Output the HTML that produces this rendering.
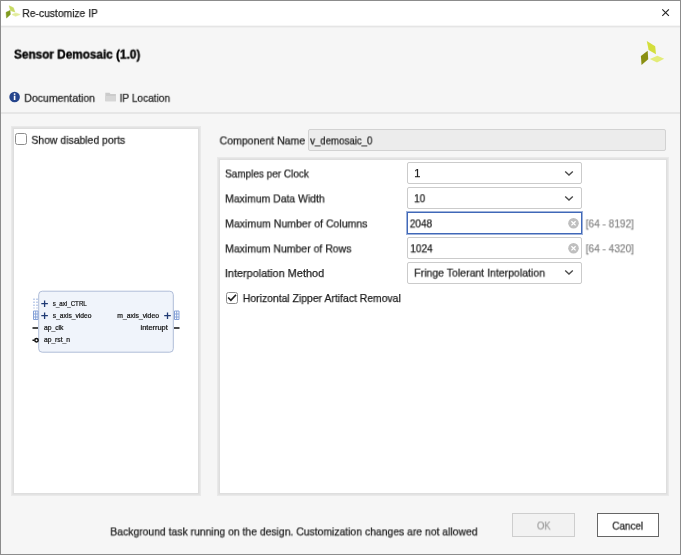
<!DOCTYPE html>
<html><head><meta charset="utf-8"><title>Re-customize IP</title>
<style>
*{box-sizing:border-box;margin:0;padding:0}
html,body{width:681px;height:555px;overflow:hidden;background:#f6f6f6}
body{font-family:"Liberation Sans",sans-serif;font-size:11px;color:#222;position:relative}
.abs{position:absolute}
.t{-webkit-text-stroke:0.25px currentColor;position:absolute;white-space:nowrap;line-height:16px;height:16px;will-change:transform;transform-origin:0 0}
#win{position:absolute;left:0;top:0;width:681px;height:555px;border:1px solid #8c8c8c}
#titlebar{position:absolute;left:1px;top:1px;width:679px;height:24px;background:#fff}
.hr{position:absolute;left:1px;width:679px;height:2px;background:#e6e6e6}
.panel{position:absolute;background:#fff;box-shadow:inset 0 0 0 1px #e9e9e9,inset 0 0 0 2px #e3e3e3,inset 0 0 0 3px #dedede}
.combo{position:absolute;left:407px;width:175px;height:22px;background:#fff;border:1px solid #cbcbcb;border-radius:2px}
.cb{position:absolute;width:12px;height:12px;border:1px solid #8e8e8e;border-radius:2.5px;background:#fff}
.btn{position:absolute;width:62px;height:24px;background:#fff;border:1px solid #666}
</style></head><body>
<div id="win"></div>
<div id="titlebar"></div>
<svg class="abs" style="left:4px;top:4px" width="18" height="16" viewBox="4 4 18 16">
<polygon points="9.200,5.800 13.400,7.800 14.800,12 10.500,10.500" fill="#c6da62" stroke="#c6da62" stroke-width="0.600" stroke-linejoin="round"/>
<polygon points="6.100,12.300 10,10.500 10.400,14.500 6.500,18" fill="#7f9a1e" stroke="#7f9a1e" stroke-width="0.500" stroke-linejoin="round"/>
<polygon points="12,14.500 15.800,12.900 20.200,14.500 15.600,16.300" fill="#e2ec9c" stroke="#e2ec9c" stroke-width="0.600" stroke-linejoin="round"/>
</svg>
<svg class="abs" style="left:661px;top:8px" width="10" height="10" viewBox="0 0 10 10"><path d="M1.300 1.300L7.900 7.900M7.900 1.300L1.300 7.900" stroke="#222" stroke-width="1.100" fill="none"/></svg>
<div class="hr" style="top:25px;height:1px;background:#f6f6f6"></div><div class="hr" style="top:26px;height:1px;background:#e5e5e5"></div><div class="hr" style="top:27px;height:1px;background:#efefef"></div>

<svg class="abs" style="left:638px;top:39px" width="28" height="28" viewBox="638 39 28 28">
<polygon points="646.800,41 655.200,46.300 656,54.200 648.600,50" fill="#d3de3c"/>
<polygon points="640.900,56 647.700,50.700 648.200,59.200 641.500,65" fill="#8a8f12"/>
<polygon points="649.800,58.900 657.400,55.700 664.200,58.800 657,62.600" fill="#e3ec78"/>
</svg>

<svg class="abs" style="left:8px;top:90px" width="14" height="14" viewBox="8 90 14 14">
<circle cx="14.600" cy="97" r="5.300" fill="#25448c"/>
<circle cx="14.600" cy="94.100" r="0.950" fill="#fff"/>
<rect x="13.800" y="95.700" width="1.600" height="4.300" fill="#fff"/>
</svg>
<svg class="abs" style="left:104px;top:91px" width="14" height="12" viewBox="104 91 14 12">
<path d="M105.300 92.700h4.200l1 1.300h5.400v7.200h-10.600z" fill="#cbcbcb"/>
<path d="M105.300 96h10.600v5.200h-10.600z" fill="#d6d6d6"/>
</svg>
<div class="hr" style="top:112px"></div>

<div class="panel" style="left:11px;top:126px;width:190px;height:370px"></div>
<div class="cb" style="left:15px;top:133px"></div>

<!-- block diagram -->
<svg class="abs" style="left:28px;top:286px;will-change:transform" width="156" height="72" viewBox="28 286 156 72" font-family="Liberation Sans, sans-serif">
<rect x="38.700" y="291.200" width="134.600" height="61" rx="3.500" fill="#f0f4fb" stroke="#b0bdd8"/>
<g stroke="#1f3a74" stroke-width="1.300"><path d="M41.300 303.700h6.600M44.600 300.400v6.600"/><path d="M41.300 315.700h6.600M44.600 312.400v6.600"/><path d="M164.200 315.700h6.600M167.500 312.400v6.600"/></g>
<g stroke="#86a2d8" stroke-width="1" fill="none"><path d="M34 298.500v10M37 298.500v10" stroke-dasharray="1.500 1.500"/><path d="M33.500 311h4.500v8.500h-4.500zM33.500 314h4.500M33.500 317h4.500M35.700 311v8.500"/><path d="M174.500 311h4.500v8.500h-4.500zM174.500 314h4.500M174.500 317h4.500M176.700 311v8.500"/></g>
<g stroke="#111" stroke-width="1.500"><path d="M32.500 328h5.500M174 328h5.500M32.500 340.200h2"/></g>
<circle cx="36.500" cy="340.200" r="1.700" fill="#fff" stroke="#111" stroke-width="1.500"/>
<g font-size="6.400" fill="#111" stroke="#111" stroke-width="0.200">
<text x="52.800" y="305.500" textLength="34" lengthAdjust="spacingAndGlyphs">s_axi_CTRL</text>
<text x="52.800" y="317.500" textLength="38.700" lengthAdjust="spacingAndGlyphs">s_axis_video</text>
<text x="43.900" y="329.700" textLength="19.600" lengthAdjust="spacingAndGlyphs">ap_clk</text>
<text x="43.900" y="342.100" textLength="26.200" lengthAdjust="spacingAndGlyphs">ap_rst_n</text>
<text x="117.300" y="317.500" textLength="41.700" lengthAdjust="spacingAndGlyphs">m_axis_video</text>
<text x="140.600" y="329.700" textLength="27.200" lengthAdjust="spacingAndGlyphs">interrupt</text>
</g>
</svg>

<div class="abs" style="left:308px;top:129px;width:358px;height:22px;background:#ececec;border:1px solid #d2d2d2;border-radius:2px"></div>

<div class="panel" style="left:217px;top:157px;width:452px;height:339px"></div>

<div class="combo" style="top:162px"></div>
<div class="combo" style="top:187px"></div>
<div class="combo" style="top:212px;border:1px solid #4068b8;border-radius:0;box-shadow:0 0 0 1px rgba(64,104,184,0.5)"></div>
<div class="combo" style="top:237px"></div>
<div class="combo" style="top:262px"></div>

<svg class="abs" style="left:563px;top:169px" width="12" height="8" viewBox="0 0 12 8"><path d="M2.200 2.400L6 6L9.800 2.400" stroke="#4d4d4d" stroke-width="1.400" fill="none"/></svg>
<svg class="abs" style="left:563px;top:194px" width="12" height="8" viewBox="0 0 12 8"><path d="M2.200 2.400L6 6L9.800 2.400" stroke="#4d4d4d" stroke-width="1.400" fill="none"/></svg>
<svg class="abs" style="left:563px;top:268px" width="12" height="8" viewBox="0 0 12 8"><path d="M2.200 2.400L6 6L9.800 2.400" stroke="#4d4d4d" stroke-width="1.400" fill="none"/></svg>

<svg class="abs" style="left:567px;top:217px" width="13" height="13" viewBox="0 0 13 13"><circle cx="6.500" cy="6.300" r="5.300" fill="#bfbfbf"/><path d="M4.400 4.200L8.600 8.400M8.600 4.200L4.400 8.400" stroke="#fff" stroke-width="1.300"/></svg>
<svg class="abs" style="left:567px;top:242px" width="13" height="13" viewBox="0 0 13 13"><circle cx="6.500" cy="6.300" r="5.300" fill="#bfbfbf"/><path d="M4.400 4.200L8.600 8.400M8.600 4.200L4.400 8.400" stroke="#fff" stroke-width="1.300"/></svg>

<div class="cb" style="left:226px;top:292px"></div>
<svg class="abs" style="left:226px;top:292px" width="12" height="12" viewBox="0 0 12 12"><path d="M2.100 5.500L4.900 8.300L10 2.700" stroke="#222" stroke-width="1.700" fill="none"/></svg>

<div class="btn" style="left:512px;top:513px;width:63px;border-color:#cecece;background:#f2f2f2"></div>
<div class="btn" style="left:597px;top:513px"></div>
<div class="t" style="left:22px;top:5px;font-size:11px;transform:translate(0.30px,0.00px) scaleX(0.9375);color:#1f1f1f">Re-customize IP</div>
<div class="t" style="left:14px;top:46px;font-size:12px;font-weight:bold;-webkit-text-stroke:0.35px currentColor;transform:translate(0.00px,0.60px) scaleX(0.9809);color:#000">Sensor Demosaic (1.0)</div>
<div class="t" style="left:24px;top:89px;font-size:11px;transform:translate(0.30px,0.80px) scaleX(0.9564);color:#1c1c1c">Documentation</div>
<div class="t" style="left:119px;top:89px;font-size:11px;transform:translate(0.60px,0.80px) scaleX(0.9202);color:#1c1c1c">IP Location</div>
<div class="t" style="left:31px;top:131px;font-size:11px;transform:translate(0.40px,0.80px) scaleX(0.9472);color:#1c1c1c">Show disabled ports</div>
<div class="t" style="left:219px;top:132px;font-size:11px;transform:translate(0.60px,0.40px) scaleX(0.9585);color:#1c1c1c">Component Name</div>
<div class="t" style="left:310px;top:132px;font-size:11px;transform:translate(0.10px,0.40px) scaleX(0.8786);color:#1c1c1c">v_demosaic_0</div>
<div class="t" style="left:225px;top:165px;font-size:11px;transform:translate(0.10px,0.50px) scaleX(0.9072);color:#1c1c1c">Samples per Clock</div>
<div class="t" style="left:225px;top:190px;font-size:11px;transform:translate(0.10px,0.40px) scaleX(0.9473);color:#1c1c1c">Maximum Data Width</div>
<div class="t" style="left:225px;top:215px;font-size:11px;transform:translate(0.10px,0.40px) scaleX(0.9584);color:#1c1c1c">Maximum Number of Columns</div>
<div class="t" style="left:225px;top:240px;font-size:11px;transform:translate(0.10px,0.40px) scaleX(0.9520);color:#1c1c1c">Maximum Number of Rows</div>
<div class="t" style="left:224px;top:265px;font-size:11px;transform:translate(0.80px,0.00px) scaleX(0.9899);color:#1c1c1c">Interpolation Method</div>
<div class="t" style="left:242px;top:290px;font-size:11px;transform:translate(0.80px,0.00px) scaleX(0.9466);color:#1c1c1c">Horizontal Zipper Artifact Removal</div>
<div class="t" style="left:414px;top:165px;font-size:11px;transform:translate(0.30px,0.20px);color:#1c1c1c">1</div>
<div class="t" style="left:414px;top:190px;font-size:11px;transform:translate(0.10px,0.20px) scaleX(0.9200);color:#1c1c1c">10</div>
<div class="t" style="left:409px;top:215px;font-size:11px;transform:translate(0.80px,0.40px) scaleX(0.9167);color:#1c1c1c">2048</div>
<div class="t" style="left:410px;top:240px;font-size:11px;transform:translate(0.30px,0.30px) scaleX(0.9170);color:#1c1c1c">1024</div>
<div class="t" style="left:414px;top:264px;font-size:11px;transform:translate(0.20px,0.60px) scaleX(0.9562);color:#1c1c1c">Fringe Tolerant Interpolation</div>
<div class="t" style="left:585px;top:215px;font-size:11px;transform:translate(0.70px,0.40px) scaleX(0.9171);color:#888888">[64 - 8192]</div>
<div class="t" style="left:585px;top:240px;font-size:11px;transform:translate(0.70px,0.30px) scaleX(0.9171);color:#888888">[64 - 4320]</div>
<div class="t" style="left:110px;top:523px;font-size:11px;transform:translate(0.30px,0.40px) scaleX(0.9442);color:#1c1c1c">Background task running on the design. Customization changes are not allowed</div>
<div class="t" style="left:536px;top:517px;font-size:11px;letter-spacing:-0.261px;transform:translate(0.90px,0.50px) scaleX(0.8800);color:#a0a0a0">OK</div>
<div class="t" style="left:612px;top:517px;font-size:11px;transform:translate(0.30px,0.60px) scaleX(0.8985);color:#1c1c1c">Cancel</div>
</body></html>
